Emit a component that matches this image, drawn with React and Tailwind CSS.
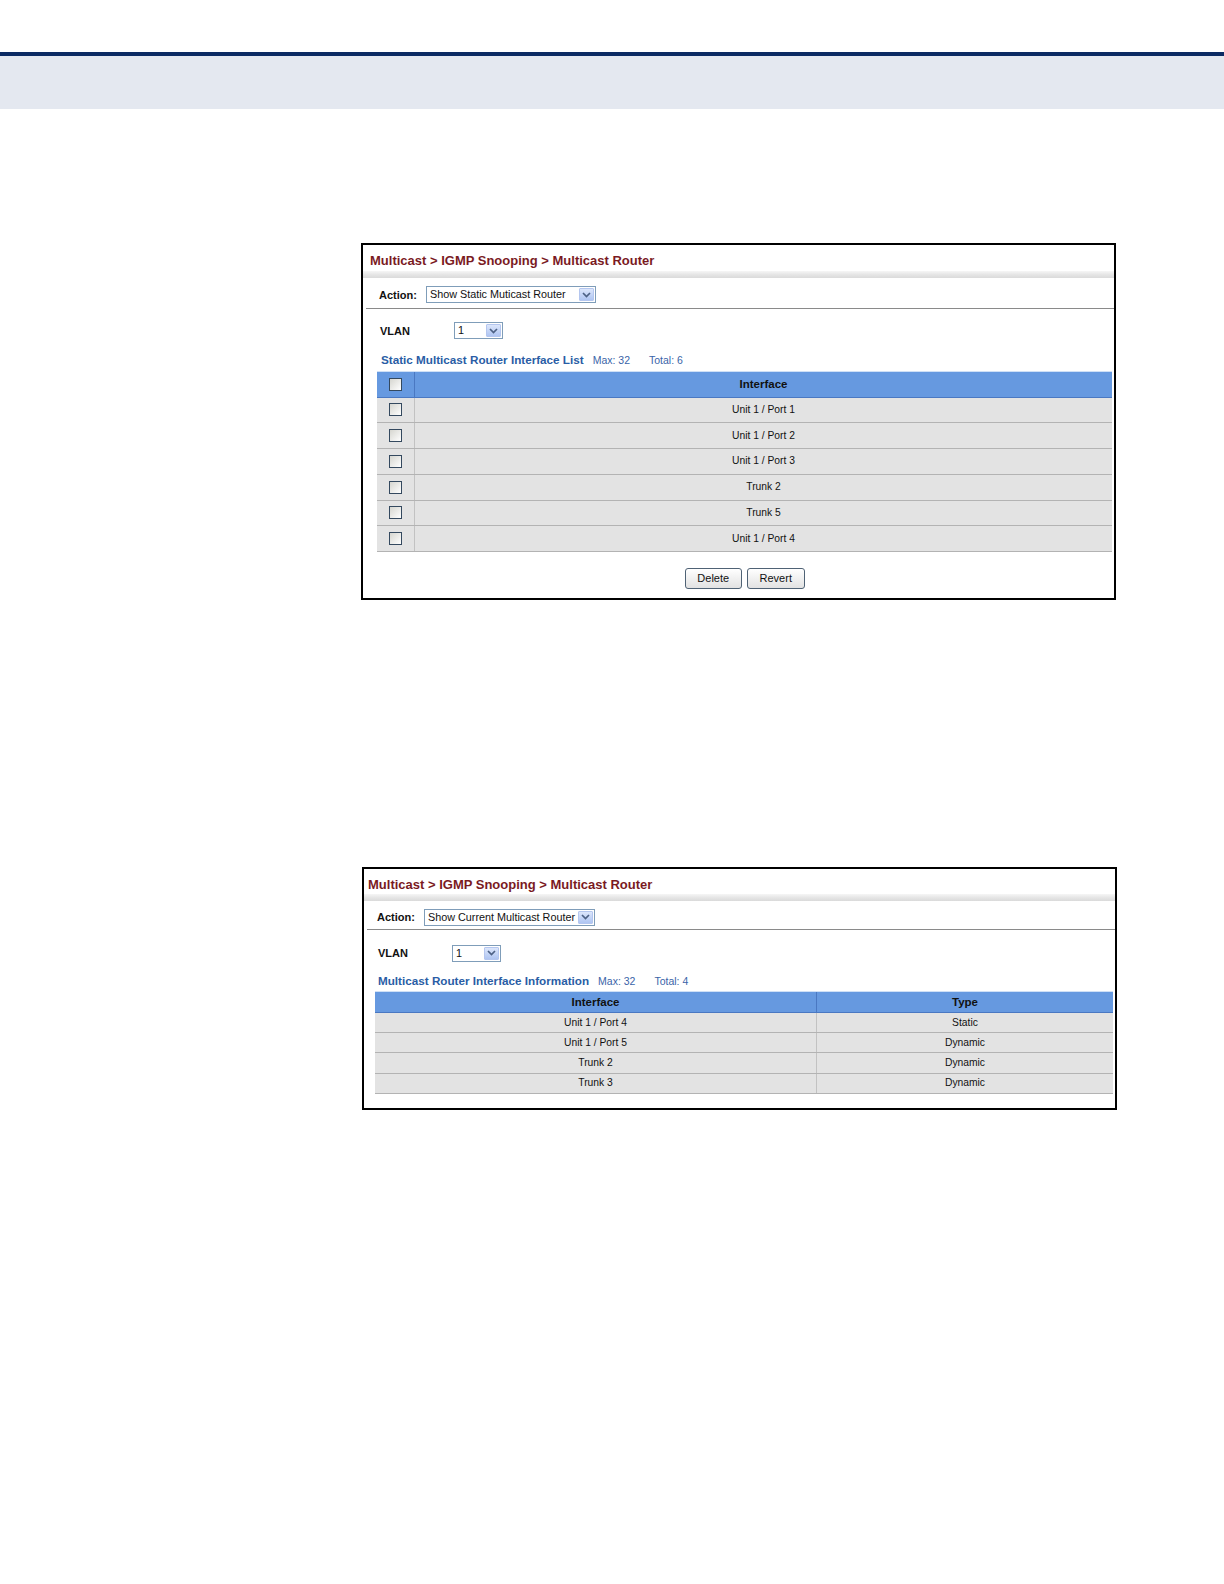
import React from "react";

function Chevron() {
  return (
    <svg width="9" height="6" viewBox="0 0 9 6">
      <path d="M1 1 L4.5 4.5 L8 1" stroke="#4d6185" strokeWidth="1.7" fill="none" />
    </svg>
  );
}

function Select({ className, text }) {
  return (
    <div className={"flex items-stretch border border-[#7f9db9] bg-white " + className}>
      <span className="flex-1 overflow-hidden whitespace-nowrap pl-[3px] text-[10.8px] leading-[15px] text-[#111]">
        {text}
      </span>
      <span className="m-[1px] flex w-[15px] items-center justify-center rounded-[1px] border border-[#b4c6ef] bg-gradient-to-b from-[#dce6fb] to-[#afc5f2]">
        <Chevron />
      </span>
    </div>
  );
}

function Checkbox() {
  return <span className="block h-[13px] w-[13px] border border-[#34495f] bg-gradient-to-br from-[#d6d6d0] to-white" />;
}

function Button({ children }) {
  return (
    <button className="h-[21px] w-[57.5px] rounded-[3px] border border-[#4f6275] bg-gradient-to-b from-white to-[#e2e2e2] text-[11px] leading-[19px] text-[#111]">
      {children}
    </button>
  );
}

function Gradient() {
  return <div className="h-[7px] bg-gradient-to-b from-[#f6f6f6] via-[#e6e6e6] to-[#dadada]" />;
}

function SubTitle({ title, max, total }) {
  return (
    <div className="flex h-[14px] items-baseline leading-[14px]">
      <span className="text-[11.7px] font-bold text-[#2a5da5]">{title}</span>
      <span className="ml-[9px] text-[10.5px] text-[#3a64a8]">Max: {max}</span>
      <span className="ml-[19px] text-[10.5px] text-[#3a64a8]">Total: {total}</span>
    </div>
  );
}

const staticRows = ["Unit 1 / Port 1", "Unit 1 / Port 2", "Unit 1 / Port 3", "Trunk 2", "Trunk 5", "Unit 1 / Port 4"];
const currentRows = [
  ["Unit 1 / Port 4", "Static"],
  ["Unit 1 / Port 5", "Dynamic"],
  ["Trunk 2", "Dynamic"],
  ["Trunk 3", "Dynamic"],
];

export default function App() {
  return (
    <div className="min-h-[1584px] w-full bg-white font-['Liberation_Sans',Arial,sans-serif] text-[#111]">
      <div className="h-[52px]" />
      <div className="h-[4px] bg-[#0b2a63]" />
      <div className="h-[53px] bg-[#e4e8f0]" />

      {/* Panel 1 */}
      <div className="ml-[361px] mt-[134px] w-[755px] border-2 border-black">
        <div className="pb-[3px] pl-[7px] pt-[9px] text-[13px] font-bold leading-[14px] text-[#7a1a1f]">
          Multicast &gt; IGMP Snooping &gt; Multicast Router
        </div>
        <Gradient />
        <div className="mt-[8px] flex h-[17px] items-center pl-[16px]">
          <span className="w-[47px] text-[11px] font-bold leading-[14px]">Action:</span>
          <Select className="h-[17px] w-[170px]" text="Show Static Muticast Router" />
        </div>
        <div className="ml-[3px] mt-[5px] h-px bg-[#8a8a8a]" />
        <div className="mt-[13px] flex h-[17px] items-center pl-[17px]">
          <span className="w-[74px] text-[11px] font-bold leading-[14px]">VLAN</span>
          <Select className="h-[17px] w-[49px]" text="1" />
        </div>
        <div className="mt-[14px] pl-[18px]">
          <SubTitle title="Static Multicast Router Interface List" max="32" total="6" />
        </div>
        <div className="ml-[14px] mr-[2px] mt-[4px]">
          <div className="flex h-[26.5px] border-b border-t border-b-[#4a78c2] border-t-[#cfe0f6] bg-[#6699e0]">
            <div className="flex w-[38px] items-center justify-center border-r border-[#4a78c2]">
              <Checkbox />
            </div>
            <div className="flex flex-1 items-center justify-center text-[11.5px] font-bold leading-[14px]">Interface</div>
          </div>
          {staticRows.map((r, i) => (
            <div key={i} className="flex h-[25.75px] border-b border-[#b3b3b3] bg-[#e3e3e3]">
              <div className="flex w-[38px] items-center justify-center border-r border-[#c2c2c2]">
                <Checkbox />
              </div>
              <div className="flex flex-1 items-center justify-center text-[10.3px] leading-[12px]">{r}</div>
            </div>
          ))}
        </div>
        <div className="ml-[14px] mr-[2px] mt-[16px] flex h-[21px] justify-center gap-[5px]">
          <Button>Delete</Button>
          <Button>Revert</Button>
        </div>
        <div className="h-[8.5px]" />
      </div>

      {/* Panel 2 */}
      <div className="ml-[362px] mt-[267px] w-[755px] border-2 border-black">
        <div className="pb-[2px] pl-[4px] pt-[9px] text-[13px] font-bold leading-[14px] text-[#7a1a1f]">
          Multicast &gt; IGMP Snooping &gt; Multicast Router
        </div>
        <Gradient />
        <div className="mt-[8px] flex h-[17px] items-center pl-[13px]">
          <span className="w-[47px] text-[11px] font-bold leading-[14px]">Action:</span>
          <Select className="h-[17px] w-[171px]" text="Show Current Multicast Router" />
        </div>
        <div className="ml-[3px] mt-[3px] h-px bg-[#8a8a8a]" />
        <div className="mt-[15px] flex h-[17px] items-center pl-[14px]">
          <span className="w-[74px] text-[11px] font-bold leading-[14px]">VLAN</span>
          <Select className="h-[17px] w-[49px]" text="1" />
        </div>
        <div className="mt-[12px] pl-[14px]">
          <SubTitle title="Multicast Router Interface Information" max="32" total="4" />
        </div>
        <div className="ml-[11px] mr-[2px] mt-[3px]">
          <div className="flex h-[22.5px] border-b border-t border-b-[#4a78c2] border-t-[#cfe0f6] bg-[#6699e0] text-[11.5px] font-bold leading-[14px]">
            <div className="flex w-[442px] items-center justify-center border-r border-[#4a78c2]">Interface</div>
            <div className="flex flex-1 items-center justify-center">Type</div>
          </div>
          {currentRows.map((r, i) => (
            <div key={i} className="flex h-[20.2px] border-b border-[#b3b3b3] bg-[#e3e3e3] text-[10.3px] leading-[12px]">
              <div className="flex w-[442px] items-center justify-center border-r border-[#c2c2c2]">{r[0]}</div>
              <div className="flex flex-1 items-center justify-center">{r[1]}</div>
            </div>
          ))}
        </div>
        <div className="h-[14px]" />
      </div>
    </div>
  );
}
